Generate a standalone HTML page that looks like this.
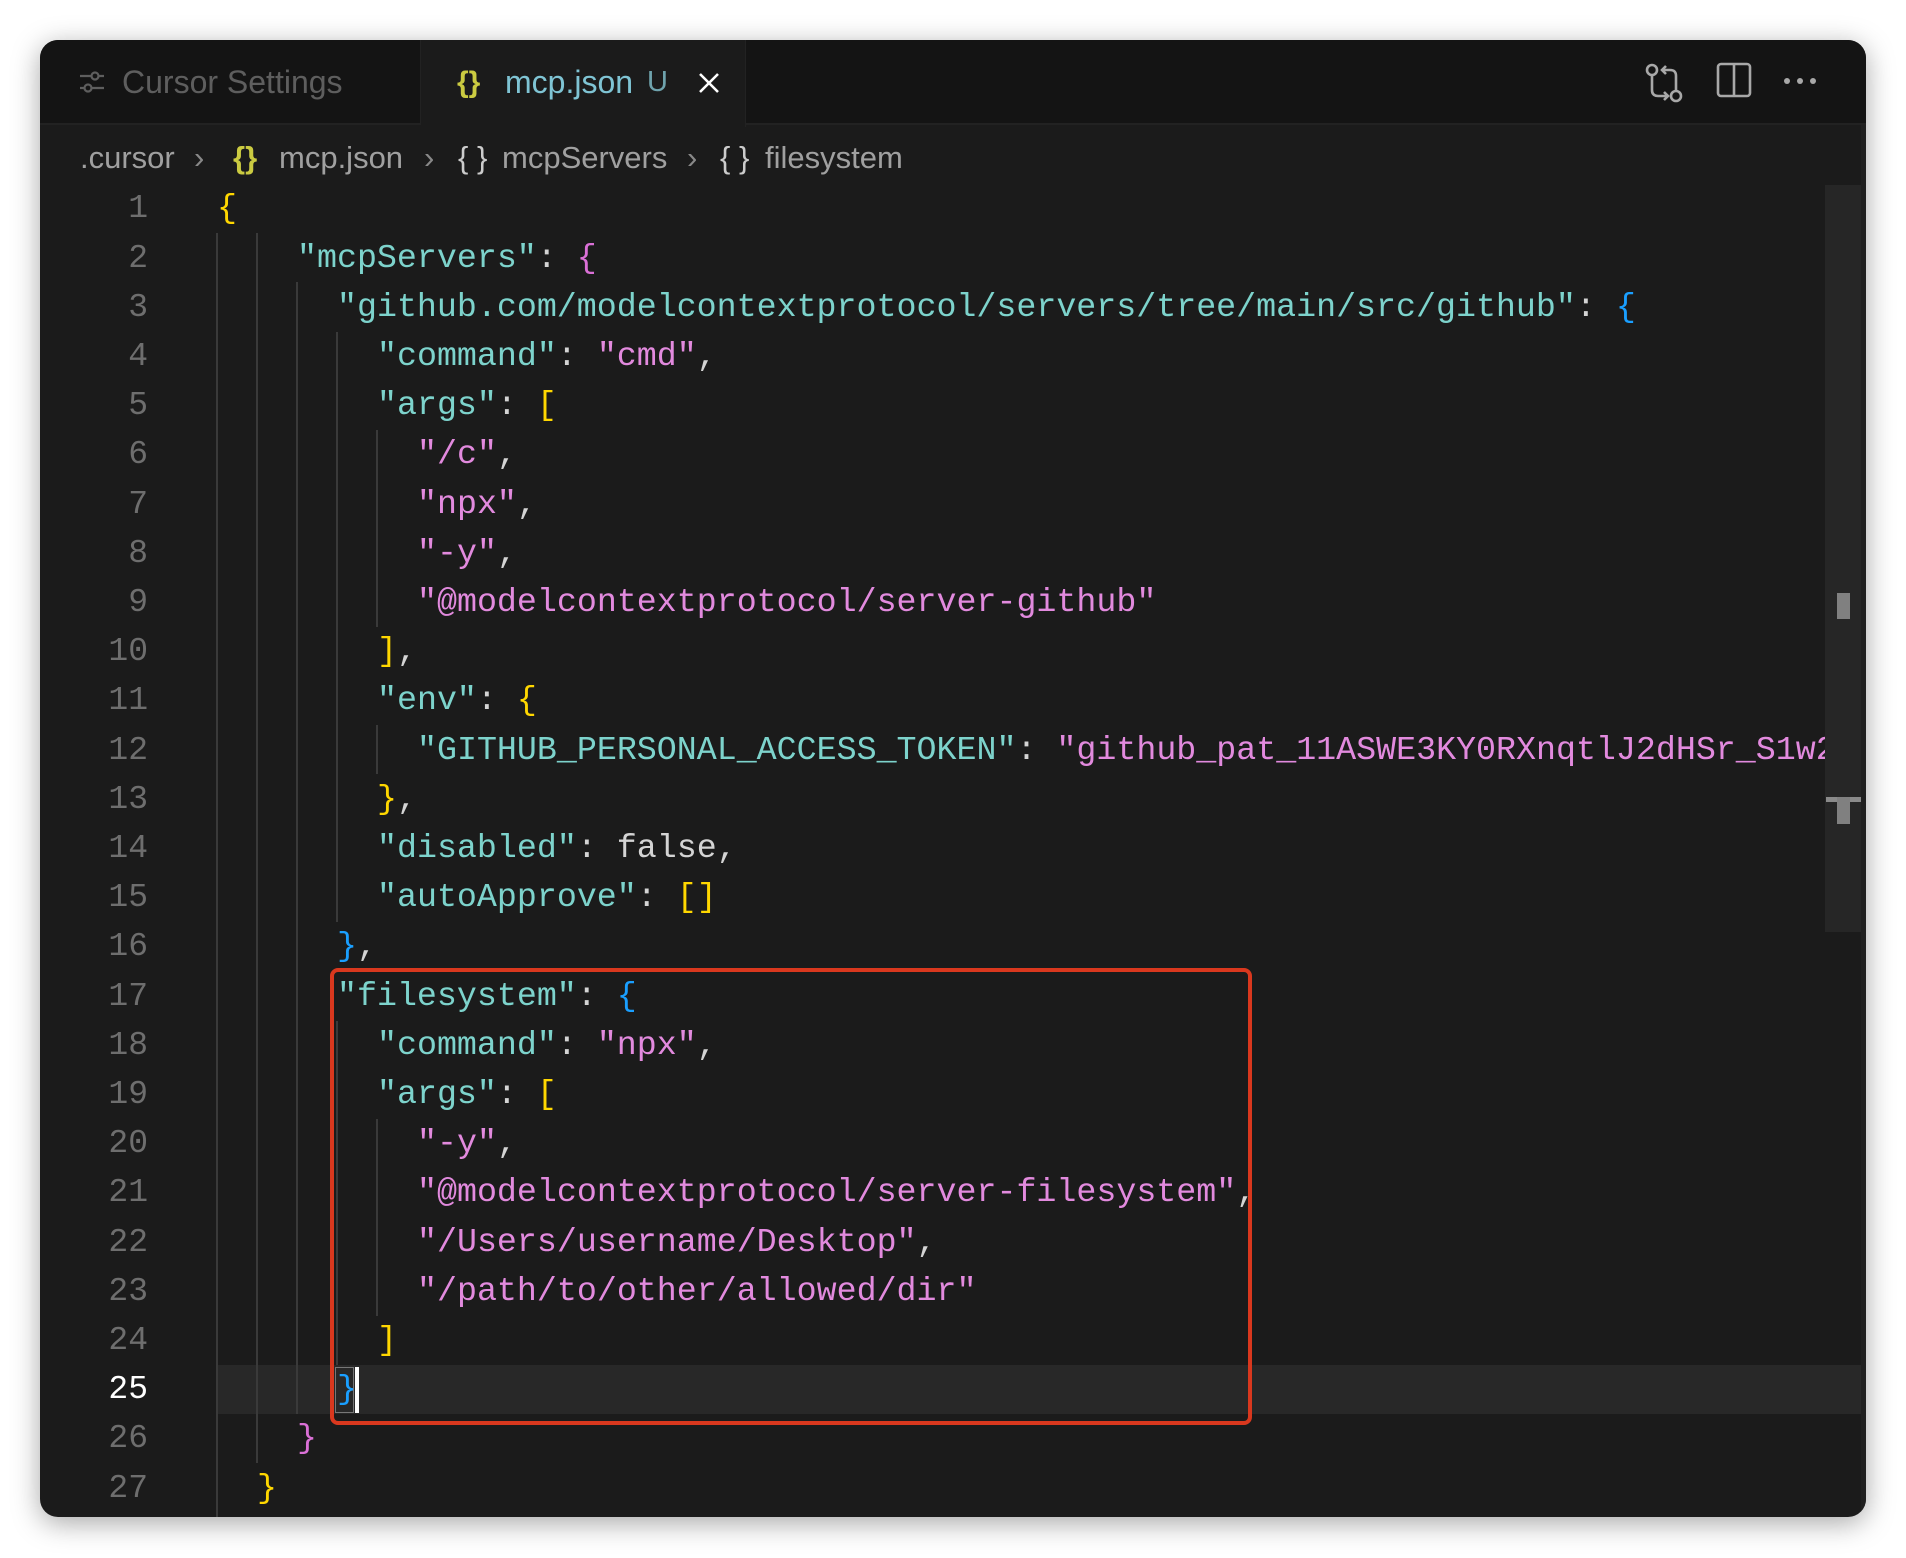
<!DOCTYPE html>
<html><head><meta charset="utf-8"><style>
*{margin:0;padding:0;box-sizing:border-box}
body{width:1906px;height:1558px;background:#fff;position:relative;overflow:hidden;font-family:"Liberation Sans",sans-serif}
.win{position:absolute;left:40px;top:40px;width:1826px;height:1477px;background:#1b1b1b;border-radius:18px;overflow:hidden;box-shadow:0 6px 28px rgba(0,0,0,.35)}
.tabbar{position:absolute;left:0;top:0;width:100%;height:85px;background:#141414;border-bottom:2px solid #222}
.tab{position:absolute;top:0;height:85px;font-size:32px;line-height:85px;white-space:nowrap}
.t1{left:0;width:381px;color:#5e5e5e;border-right:1px solid #222}
.t2{left:381px;width:325px;background:#1b1b1b;height:87px;border-right:1px solid #222}
.bc{position:absolute;top:98px;left:40px;font-size:31px;line-height:40px;color:#a0a0a0;white-space:nowrap}
.ln{position:absolute;left:0;width:108px;text-align:right;color:#6e6e6e;font-family:"Liberation Mono",monospace;font-size:33px;height:49.2px;line-height:49.2px}
.cl{position:absolute;white-space:pre;font-family:"Liberation Mono",monospace;font-size:33.3px;height:49.2px;line-height:49.2px;color:#d4d4d4}
.g{position:absolute;width:2px;background:#3a3a3a}
.k{color:#7dd3cc}.s{color:#e28ade}.y{color:#ffd700}.p{color:#da70d6}.b{color:#1a9fff}
</style></head><body>
<div class="win">
<div class="tabbar">
 <div class="tab t1"><svg style="position:absolute;left:38px;top:28px" width="28" height="28" viewBox="0 0 28 28" fill="none" stroke="#5e5e5e" stroke-width="2.2"><line x1="2" y1="8" x2="26" y2="8"/><line x1="2" y1="20" x2="26" y2="20"/><circle cx="17" cy="8" r="3.5" fill="#141414"/><circle cx="10" cy="20" r="3.5" fill="#141414"/></svg><span style="position:absolute;left:82px">Cursor Settings</span></div>
 <div class="tab t2"><span style="position:absolute;left:36px;color:#cbcb41;font-weight:bold;font-size:30px">{}</span><span style="position:absolute;left:84px;color:#7fc4d4">mcp.json</span><span style="position:absolute;left:226px;color:#6fa3ad;font-size:29px">U</span><svg style="position:absolute;left:277px;top:32px" width="22" height="22" viewBox="0 0 22 22" stroke="#fff" stroke-width="2.6"><line x1="2" y1="2" x2="20" y2="20"/><line x1="20" y1="2" x2="2" y2="20"/></svg></div>
 <svg style="position:absolute;left:1604px;top:22px" width="40" height="42" viewBox="0 0 40 42" fill="none" stroke="#a8a8a8" stroke-width="2.6"><circle cx="8" cy="8" r="5"/><path d="M8 13 V28 Q8 34 14 34 H24 M20 30 l4 4 -4 4"/><circle cx="32" cy="34" r="5"/><path d="M32 29 V14 Q32 8 26 8 H18 M22 4 l-4 4 4 4"/></svg>
 <svg style="position:absolute;left:1676px;top:22px" width="36" height="36" viewBox="0 0 36 36" fill="none" stroke="#a8a8a8" stroke-width="2.6"><rect x="2" y="2" width="32" height="32" rx="3"/><line x1="18" y1="2" x2="18" y2="34"/></svg>
 <svg style="position:absolute;left:1742px;top:36px" width="36" height="10" viewBox="0 0 36 10" fill="#a8a8a8"><circle cx="5" cy="5" r="3"/><circle cx="18" cy="5" r="3"/><circle cx="31" cy="5" r="3"/></svg>
</div>
<div class="bc"><span>.cursor</span><span style="position:absolute;left:114px;color:#888">&#x203A;</span><span style="position:absolute;left:153px;color:#cbcb41;font-weight:bold">{}</span><span style="position:absolute;left:199px">mcp.json</span><span style="position:absolute;left:344px;color:#888">&#x203A;</span><span style="position:absolute;left:378px;color:#ccc">{ }</span><span style="position:absolute;left:422px">mcpServers</span><span style="position:absolute;left:607px;color:#888">&#x203A;</span><span style="position:absolute;left:640px;color:#ccc">{ }</span><span style="position:absolute;left:685px">filesystem</span></div>

<div style="position:absolute;left:176px;top:1325px;width:1650px;height:49.2px;background:#282828"></div>

<div class="g" style="left:176px;top:193px;height:1284px"></div>
<div class="g" style="left:216px;top:193px;height:1230px"></div>
<div class="g" style="left:256px;top:242px;height:1132px"></div>
<div class="g" style="left:296px;top:292px;height:590px"></div>
<div class="g" style="left:296px;top:981px;height:344px"></div>
<div class="g" style="left:336px;top:390px;height:197px"></div>
<div class="g" style="left:336px;top:685px;height:49px"></div>
<div class="g" style="left:336px;top:1079px;height:197px"></div>

<div id="code"></div>

<div style="position:absolute;left:290px;top:928px;width:922px;height:457px;border:4px solid #d9381e;border-radius:8px"></div>
<div style="position:absolute;left:295px;top:1327px;width:19px;height:46px;border:1px solid #777"></div>
<div style="position:absolute;left:315px;top:1327px;width:4px;height:46px;background:#fff"></div>

<div style="position:absolute;left:1785px;top:145px;width:36px;height:747px;background:#262626"></div>
<div style="position:absolute;left:1797px;top:553px;width:13px;height:26px;background:#808080"></div>
<div style="position:absolute;left:1786px;top:757px;width:35px;height:5px;background:#8a8a8a"></div>
<div style="position:absolute;left:1797px;top:757px;width:13px;height:27px;background:#808080"></div>
<div style="position:absolute;left:1821px;top:85px;width:5px;height:1392px;background:#202020"></div>
</div>
<script>
var L=[
[177,'<span class="y">{</span>'],
[257,'<span class="k">"mcpServers"</span>: <span class="p">{</span>'],
[297,'<span class="k">"github.com/modelcontextprotocol/servers/tree/main/src/github"</span>: <span class="b">{</span>'],
[337,'<span class="k">"command"</span>: <span class="s">"cmd"</span>,'],
[337,'<span class="k">"args"</span>: <span class="y">[</span>'],
[377,'<span class="s">"/c"</span>,'],
[377,'<span class="s">"npx"</span>,'],
[377,'<span class="s">"-y"</span>,'],
[377,'<span class="s">"@modelcontextprotocol/server-github"</span>'],
[337,'<span class="y">]</span>,'],
[337,'<span class="k">"env"</span>: <span class="y">{</span>'],
[377,'<span class="k">"GITHUB_PERSONAL_ACCESS_TOKEN"</span>: <span class="s">"github_pat_11ASWE3KY0RXnqtlJ2dHSr_S1w2hE</span>'],
[337,'<span class="y">}</span>,'],
[337,'<span class="k">"disabled"</span>: false,'],
[337,'<span class="k">"autoApprove"</span>: <span class="y">[]</span>'],
[297,'<span class="b">}</span>,'],
[297,'<span class="k">"filesystem"</span>: <span class="b">{</span>'],
[337,'<span class="k">"command"</span>: <span class="s">"npx"</span>,'],
[337,'<span class="k">"args"</span>: <span class="y">[</span>'],
[377,'<span class="s">"-y"</span>,'],
[377,'<span class="s">"@modelcontextprotocol/server-filesystem"</span>,'],
[377,'<span class="s">"/Users/username/Desktop"</span>,'],
[377,'<span class="s">"/path/to/other/allowed/dir"</span>'],
[337,'<span class="y">]</span>'],
[297,'<span class="b">}</span>'],
[257,'<span class="p">}</span>'],
[217,'<span class="y">}</span>']];
var h='';
for(var i=0;i<L.length;i++){var t=144.4+i*49.2;
h+='<div class="ln" style="top:'+t+'px;'+(i==24?'color:#fff':'')+'">'+(i+1)+'</div>';
h+='<div class="cl" style="top:'+t+'px;left:'+L[i][0]+'px">'+L[i][1]+'</div>';}
document.getElementById('code').innerHTML=h;
</script>
</body></html>
